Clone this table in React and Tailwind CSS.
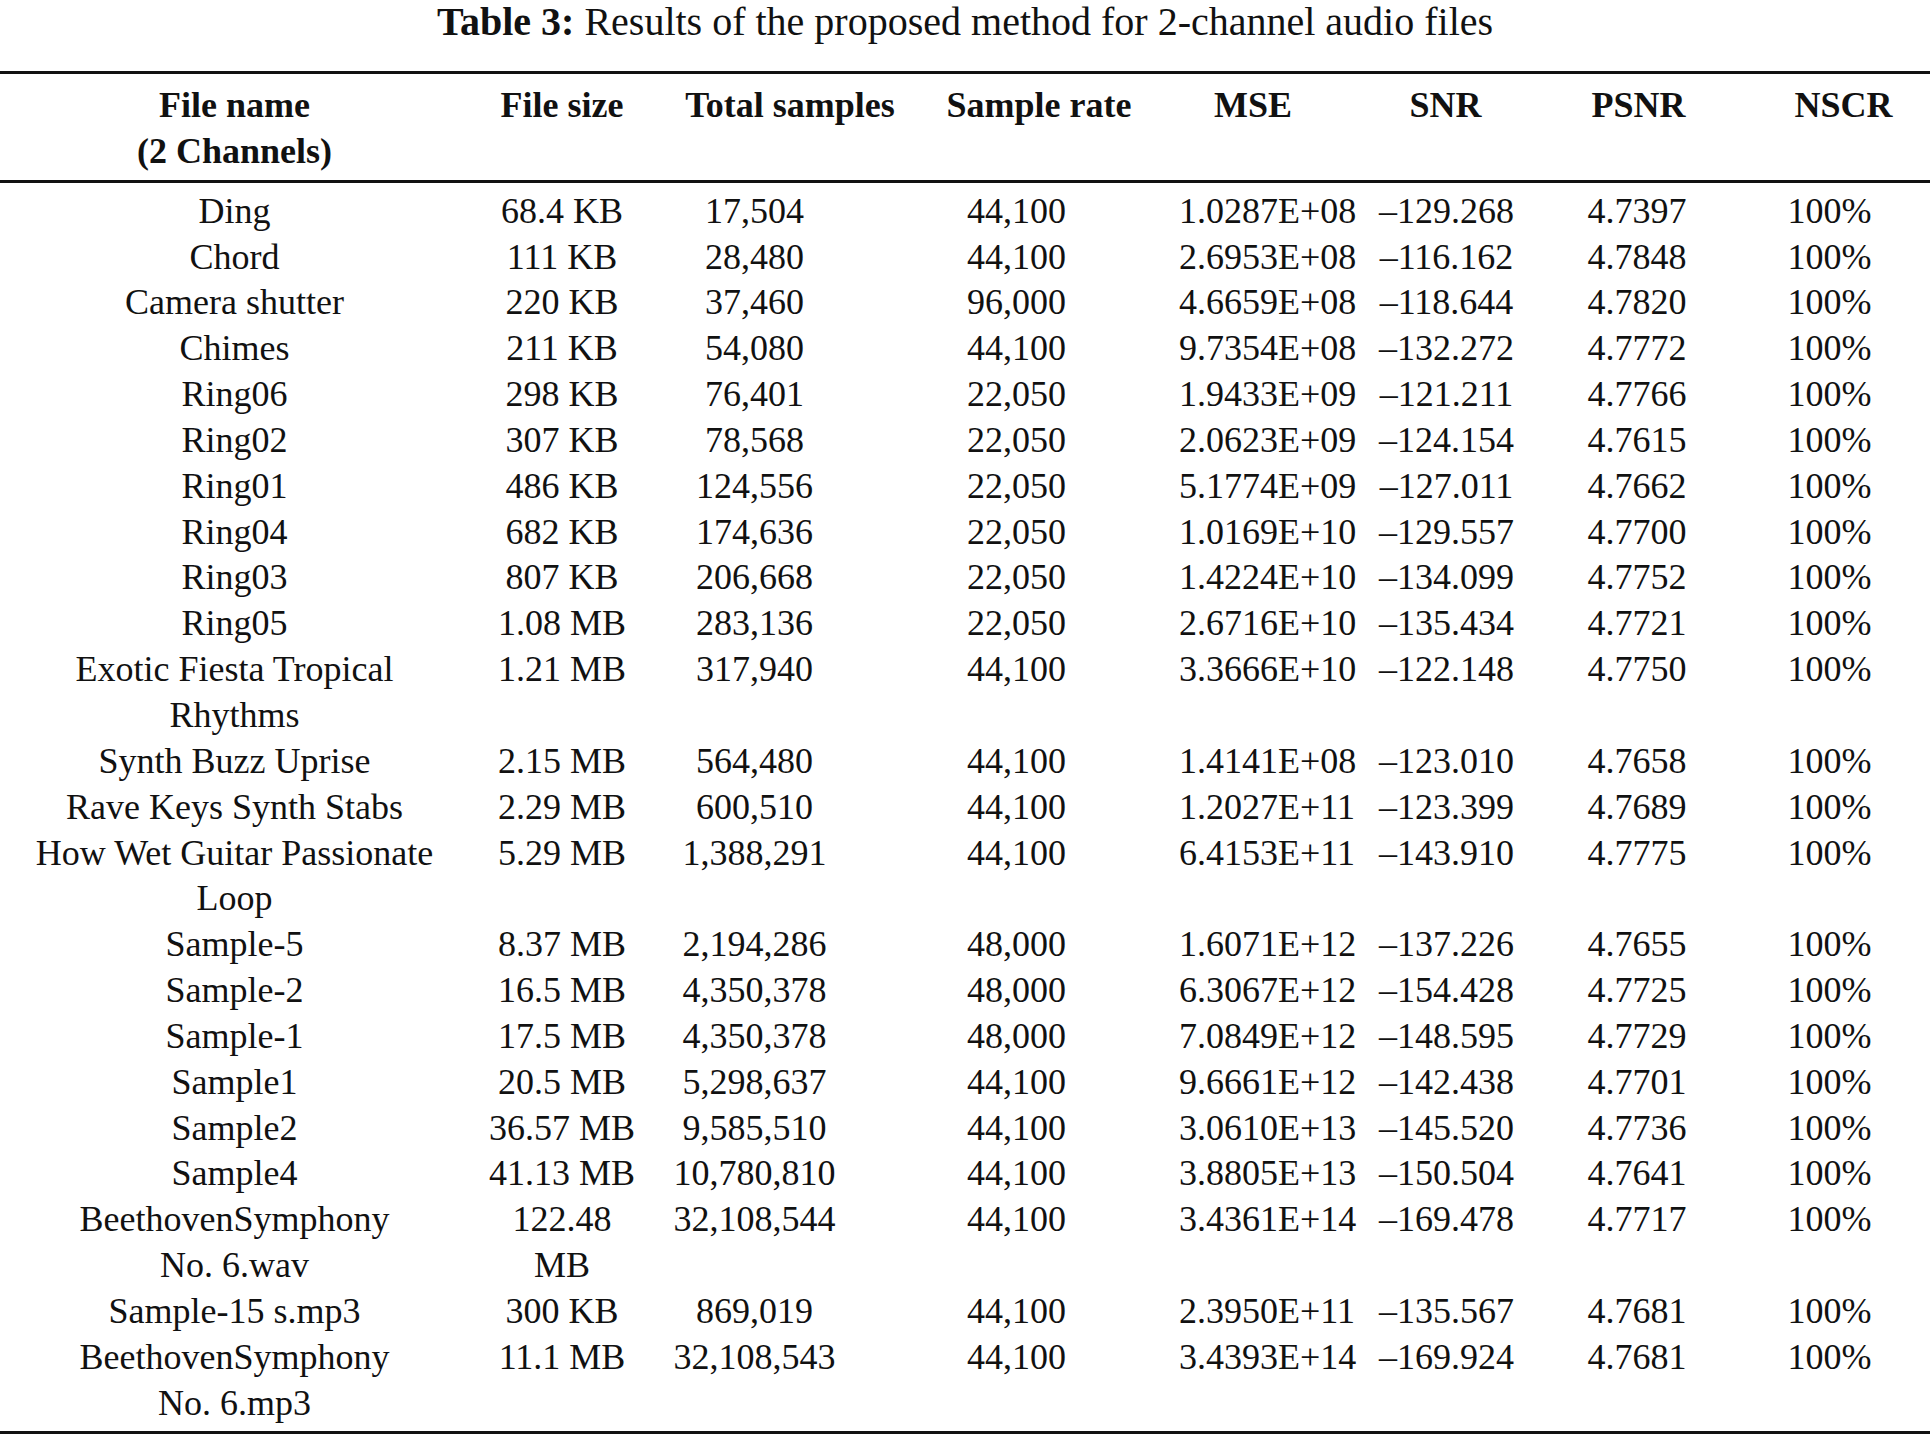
import React from 'react';

const rows = [
    [['Ding'], ['68.4 KB'], '17,504', '44,100', '1.0287E+08', '–129.268', '4.7397', '100%'],
    [['Chord'], ['111 KB'], '28,480', '44,100', '2.6953E+08', '–116.162', '4.7848', '100%'],
    [['Camera shutter'], ['220 KB'], '37,460', '96,000', '4.6659E+08', '–118.644', '4.7820', '100%'],
    [['Chimes'], ['211 KB'], '54,080', '44,100', '9.7354E+08', '–132.272', '4.7772', '100%'],
    [['Ring06'], ['298 KB'], '76,401', '22,050', '1.9433E+09', '–121.211', '4.7766', '100%'],
    [['Ring02'], ['307 KB'], '78,568', '22,050', '2.0623E+09', '–124.154', '4.7615', '100%'],
    [['Ring01'], ['486 KB'], '124,556', '22,050', '5.1774E+09', '–127.011', '4.7662', '100%'],
    [['Ring04'], ['682 KB'], '174,636', '22,050', '1.0169E+10', '–129.557', '4.7700', '100%'],
    [['Ring03'], ['807 KB'], '206,668', '22,050', '1.4224E+10', '–134.099', '4.7752', '100%'],
    [['Ring05'], ['1.08 MB'], '283,136', '22,050', '2.6716E+10', '–135.434', '4.7721', '100%'],
    [['Exotic Fiesta Tropical', 'Rhythms'], ['1.21 MB'], '317,940', '44,100', '3.3666E+10', '–122.148', '4.7750', '100%'],
    [['Synth Buzz Uprise'], ['2.15 MB'], '564,480', '44,100', '1.4141E+08', '–123.010', '4.7658', '100%'],
    [['Rave Keys Synth Stabs'], ['2.29 MB'], '600,510', '44,100', '1.2027E+11', '–123.399', '4.7689', '100%'],
    [['How Wet Guitar Passionate', 'Loop'], ['5.29 MB'], '1,388,291', '44,100', '6.4153E+11', '–143.910', '4.7775', '100%'],
    [['Sample-5'], ['8.37 MB'], '2,194,286', '48,000', '1.6071E+12', '–137.226', '4.7655', '100%'],
    [['Sample-2'], ['16.5 MB'], '4,350,378', '48,000', '6.3067E+12', '–154.428', '4.7725', '100%'],
    [['Sample-1'], ['17.5 MB'], '4,350,378', '48,000', '7.0849E+12', '–148.595', '4.7729', '100%'],
    [['Sample1'], ['20.5 MB'], '5,298,637', '44,100', '9.6661E+12', '–142.438', '4.7701', '100%'],
    [['Sample2'], ['36.57 MB'], '9,585,510', '44,100', '3.0610E+13', '–145.520', '4.7736', '100%'],
    [['Sample4'], ['41.13 MB'], '10,780,810', '44,100', '3.8805E+13', '–150.504', '4.7641', '100%'],
    [['BeethovenSymphony', 'No. 6.wav'], ['122.48', 'MB'], '32,108,544', '44,100', '3.4361E+14', '–169.478', '4.7717', '100%'],
    [['Sample-15 s.mp3'], ['300 KB'], '869,019', '44,100', '2.3950E+11', '–135.567', '4.7681', '100%'],
    [['BeethovenSymphony', 'No. 6.mp3'], ['11.1 MB'], '32,108,543', '44,100', '3.4393E+14', '–169.924', '4.7681', '100%'],
];

function Lines({ lines }) {
    return lines.map((l, i) => (
        <span key={i} className="block whitespace-nowrap">{l}</span>
    ));
}

function Rule() {
    return <div className="h-[3px] w-full bg-[#111]" />;
}

export default function App() {
    return (
        <div className="w-[1930px] h-[1437px] bg-white text-[#111] font-['Liberation_Serif','Times_New_Roman',serif] text-[36px] overflow-hidden">
            {/* caption */}
            <div className="pb-[27px] text-center text-[40px] leading-[44px] whitespace-nowrap">
                <span className="font-bold">Table 3:</span> Results of the proposed method for 2-channel audio files
            </div>

            <Rule />

            {/* header */}
            <div className="grid grid-cols-[469px_186px_270px_228px_200px_185px_201px_1fr] pt-[9px] pb-[5px] leading-[45.84px] font-bold">
                <div className="flex flex-col items-center">
                    <Lines lines={['File name', '(2 Channels)']} />
                </div>
                <div className="flex justify-center whitespace-nowrap">File size</div>
                <div className="flex justify-center whitespace-nowrap">Total samples</div>
                <div className="flex justify-center whitespace-nowrap">Sample rate</div>
                <div className="flex justify-center whitespace-nowrap">MSE</div>
                <div className="flex justify-center whitespace-nowrap">SNR</div>
                <div className="flex justify-center whitespace-nowrap">PSNR</div>
                <div className="flex justify-center whitespace-nowrap pl-[18px]">NSCR</div>
            </div>

            <Rule />

            {/* body */}
            <div className="pt-[6px] pb-[5px] leading-[45.84px]">
                {rows.map((r, i) => (
                    <div key={i} className="grid grid-cols-[469px_186px_199px_325px_191px_153px_228px_1fr]">
                        <div className="flex flex-col items-center"><Lines lines={r[0]} /></div>
                        <div className="flex flex-col items-center"><Lines lines={r[1]} /></div>
                        <div className="flex justify-center whitespace-nowrap">{r[2]}</div>
                        <div className="flex justify-center whitespace-nowrap">{r[3]}</div>
                        <div className="flex justify-start whitespace-nowrap">{r[4]}</div>
                        <div className="flex justify-center whitespace-nowrap">{r[5]}</div>
                        <div className="flex justify-center whitespace-nowrap">{r[6]}</div>
                        <div className="flex justify-center whitespace-nowrap pr-[22px]">{r[7]}</div>
                    </div>
                ))}
            </div>

            <Rule />
        </div>
    );
}
